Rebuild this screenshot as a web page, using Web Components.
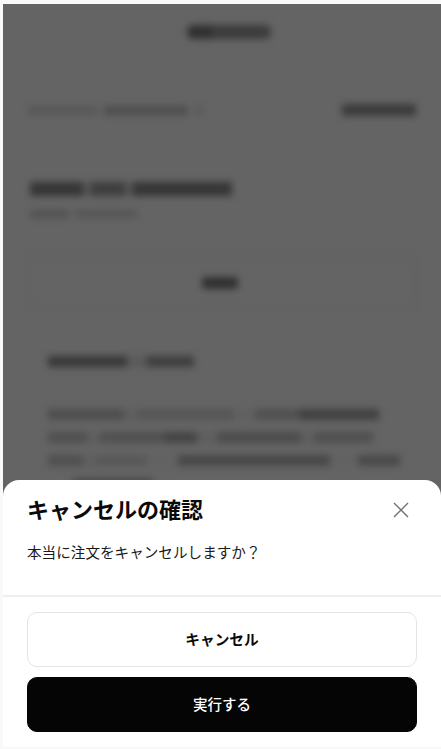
<!DOCTYPE html>
<html lang="ja">
<head>
<meta charset="utf-8">
<title>キャンセルの確認</title>
<style>
  html, body {
    height: 100%;
    margin: 0;
    overflow: hidden;
  }

  body {
    background: #f8f9fb;
    font-family: 'Noto Sans CJK JP', 'Noto Sans', sans-serif;
  }
</style>
</head>
<body>
<order-screen>
  <order-backdrop></order-backdrop>
  <confirm-sheet heading="キャンセルの確認">
    本当に注文をキャンセルしますか？
    <sheet-button slot="actions">キャンセル</sheet-button>
    <sheet-button slot="actions" primary>実行する</sheet-button>
  </confirm-sheet>
</order-screen>

<script>
class OrderScreen extends HTMLElement {
  constructor() {
    super();
    const shadowRoot = this.attachShadow( {mode: 'open'} );
    shadowRoot.innerHTML = /* template */ `
      <style>
        :host {
          box-sizing: border-box;
          display: block;
          height: 749px;
          padding: 4px 0 2px 3px;
          position: relative;
          width: 441px;
        }

        div {
          height: 100%;
          overflow: hidden;
          position: relative;
        }
      </style>
      <div><slot></slot></div>
    `;
  }
}

// Page behind the sheet, only shapes because the text is unreadable
class OrderBackdrop extends HTMLElement {
  constructor() {
    super();
    const shadowRoot = this.attachShadow( {mode: 'open'} );
    shadowRoot.innerHTML = /* template */ `
      <style>
        :host {
          background: #646464;
          display: block;
          height: 100%;
          overflow: hidden;
        }

        .page {
          box-sizing: border-box;
          display: flex;
          filter: blur( 3.5px );
          flex-direction: column;
          height: 100%;
          padding: 21px 25px 0 25px;
        }

        i {
          display: block;
        }

        .logo {
          align-self: center;
          background: linear-gradient( 90deg, #303030 0 30%, #3c3c3c 30% 100% );
          border-radius: 6px;
          height: 14px;
          margin: 0 0 0 13px;
          width: 84px;
        }

        .row {
          align-items: center;
          display: flex;
          justify-content: space-between;
          margin: 65px 0 0 0;
        }

        .row i:first-child {
          background: linear-gradient( 90deg, #585858 0 38%, #626262 38% 42%, #4e4e4e 42% 88%, #646464 88% 92%, #5a5a5a 92% 96%, transparent 96% );
          height: 9px;
          width: 182px;
        }

        .row i:last-child {
          background: #3c3c3c;
          height: 12px;
          width: 74px;
        }

        .title {
          background: linear-gradient( 90deg, #363636 0 26%, #565656 26% 30%, #3e3e3e 30% 47%, #565656 47% 51%, #363636 51% 100% );
          height: 14px;
          margin: 66px 0 0 2px;
          width: 202px;
        }

        .sub {
          background: linear-gradient( 90deg, #525252 0 36%, transparent 36% 42%, #565656 42% 100% );
          height: 8px;
          margin: 14px 0 0 2px;
          width: 107px;
        }

        .box {
          align-items: center;
          border: 1px solid #5e5e5e;
          box-sizing: border-box;
          display: flex;
          height: 50px;
          justify-content: center;
          margin: 40px 0 0 0;
        }

        .box i {
          background: #303030;
          border-radius: 4px;
          height: 12px;
          margin: 0 0 0 -4px;
          width: 36px;
        }

        .section {
          background: linear-gradient( 90deg, #383838 0 54%, #5a5a5a 54% 68%, #3e3e3e 68% 100% );
          height: 11px;
          margin: 48px 0 0 20px;
          width: 146px;
        }

        .copy {
          display: flex;
          flex-direction: column;
          gap: 12px;
          margin: 42px 0 0 20px;
          width: 345px;
        }

        .copy i {
          height: 11px;
        }

        .copy i:nth-child( 1 ) {
          background: linear-gradient( 90deg, #4e4e4e 0 22%, #5e5e5e 22% 26%, #565656 26% 54%, #606060 54% 60%, #505050 60% 73%, #404040 73% 96%, transparent 96% );
        }

        .copy i:nth-child( 2 ) {
          background: linear-gradient( 90deg, #505050 0 12%, #5e5e5e 12% 16%, #505050 16% 36%, #444444 36% 46%, #5e5e5e 46% 52%, #4c4c4c 52% 78%, #5e5e5e 78% 82%, #505050 82% 100% );
          width: 325px;
        }

        .copy i:nth-child( 3 ) {
          background: linear-gradient( 90deg, #505050 0 10%, #5e5e5e 10% 14%, #585858 14% 28%, #626262 28% 37%, #484848 37% 80%, #626262 80% 88%, #4a4a4a 88% 100% );
          width: 352px;
        }

        .copy i:nth-child( 4 ) {
          background: #4a4a4a;
          margin: 0 0 0 25px;
          width: 80px;
        }
      </style>
      <div class="page">
        <div class="logo"></div>
        <div class="row"><i></i><i></i></div>
        <div class="title"></div>
        <div class="sub"></div>
        <div class="box"><i></i></div>
        <div class="section"></div>
        <div class="copy"><i></i><i></i><i></i><i></i></div>
      </div>
    `;
  }
}

class ConfirmSheet extends HTMLElement {
  constructor() {
    super();
    const shadowRoot = this.attachShadow( {mode: 'open'} );
    shadowRoot.innerHTML = /* template */ `
      <style>
        :host {
          background: #ffffff;
          border-radius: 16px 16px 0 0;
          bottom: 0;
          display: block;
          left: 0;
          position: absolute;
          right: 0;
        }

        header {
          align-items: center;
          display: flex;
          height: 59px;
          justify-content: space-between;
          padding: 0 32px 0 24px;
        }

        h2 {
          color: #0a0a0a;
          font-size: 22px;
          font-weight: 700;
          line-height: 56px;
          margin: 0 0 3px 0;
        }

        svg {
          display: block;
          height: 16px;
          stroke: #707070;
          stroke-width: 1.4;
          width: 16px;
        }

        p {
          color: #1a1a1a;
          font-size: 14.6px;
          font-weight: 400;
          height: 55px;
          line-height: 24px;
          margin: 0;
          padding: 1px 24px 0 24px;
        }

        footer {
          border-top: 2px solid #efefef;
          display: flex;
          flex-direction: column;
          gap: 10px;
          padding: 15px 24px 15px 24px;
        }
      </style>
      <header>
        <h2></h2>
        <svg viewBox="0 0 16 16" fill="none"><path d="M1 1 L15 15 M15 1 L1 15"/></svg>
      </header>
      <p><slot></slot></p>
      <footer><slot name="actions"></slot></footer>
    `;

    // Elements
    this.$heading = shadowRoot.querySelector( 'h2' );
  }

  connectedCallback() {
    this.$heading.textContent = this.getAttribute( 'heading' );
  }
}

class SheetButton extends HTMLElement {
  constructor() {
    super();
    const shadowRoot = this.attachShadow( {mode: 'open'} );
    shadowRoot.innerHTML = /* template */ `
      <style>
        :host {
          align-items: center;
          background: #ffffff;
          border: 1px solid #e4e4e4;
          border-radius: 10px;
          box-sizing: border-box;
          color: #0a0a0a;
          cursor: pointer;
          display: flex;
          font-size: 14.7px;
          font-weight: 700;
          height: 55px;
          justify-content: center;
          padding: 0 0 2px 0;
        }

        :host( [primary] ) {
          background: #050505;
          border-color: #050505;
          color: #ffffff;
          font-weight: 500;
          font-size: 14.5px;
        }
      </style>
      <slot></slot>
    `;
  }
}

window.customElements.define( 'order-screen', OrderScreen );
window.customElements.define( 'order-backdrop', OrderBackdrop );
window.customElements.define( 'confirm-sheet', ConfirmSheet );
window.customElements.define( 'sheet-button', SheetButton );
</script>
</body>
</html>
